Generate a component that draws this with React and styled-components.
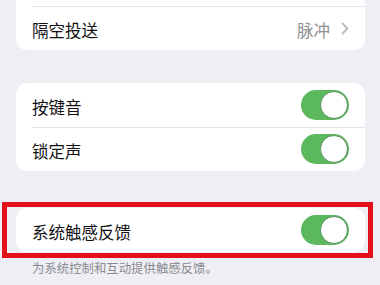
import React from 'react'
import styled, { createGlobalStyle } from 'styled-components'

const Global = createGlobalStyle`
  html, body {
    margin: 0;
    padding: 0;
    background: #efeef4;
    overflow: hidden;
  }
  body {
    font-family: "Noto Sans CJK SC", "Noto Sans", sans-serif;
    -webkit-font-smoothing: antialiased;
  }
`

const Page = styled.div`
  width: 380px;
  height: 285px;
  padding: 0 15px 0 16px;
  box-sizing: border-box;
  display: flex;
  flex-direction: column;
`

const Card = styled.div`
  background: #ffffff;
  border-radius: 11px;
  display: flex;
  flex-direction: column;
  margin-top: ${({ gap }) => gap}px;
`

const Row = styled.div`
  height: ${({ h }) => h || 44}px;
  display: flex;
  align-items: center;
  padding: 0 16px;
  position: relative;
  &:not(:first-child)::before {
    content: '';
    position: absolute;
    top: 0;
    left: 16px;
    right: 0;
    height: 1px;
    background: #e3e3e7;
  }
`

const Label = styled.span`
  flex: 1;
  font-size: 16.5px;
  color: #111113;
  padding-top: 3px;
`

const Value = styled.span`
  font-size: 16.5px;
  color: #8e8e93;
  padding-top: 3px;
  margin-right: 11px;
`

const Track = styled.div`
  width: 48px;
  height: 30px;
  border-radius: 15px;
  background: #5bb85d;
  display: flex;
  align-items: center;
  justify-content: flex-end;
  padding: 1px;
  box-sizing: border-box;
`

const Knob = styled.div`
  width: 28px;
  height: 28px;
  border-radius: 50%;
  background: #ffffff;
  box-sizing: border-box;
  border: 1.5px solid #5a8f5e;
`

const Highlight = styled.div`
  position: relative;
  margin-top: 37px;
  &::after {
    content: '';
    position: absolute;
    top: -6px;
    bottom: -6px;
    left: -14px;
    right: -8px;
    border: 5px solid #e2101a;
    pointer-events: none;
  }
`

const Footer = styled.div`
  font-size: 12.4px;
  color: #8a8a8e;
  padding: 7px 16px 0;
`

const Toggle = () => (
  <Track>
    <Knob />
  </Track>
)

const Chevron = () => (
  <svg width="8" height="13" viewBox="0 0 8 13">
    <path d="M1.5 1.5 L6.5 6.5 L1.5 11.5" fill="none" stroke="#b9b9be" strokeWidth="1.8" strokeLinecap="round" strokeLinejoin="round" />
  </svg>
)

export default function App() {
  return (
    <>
      <Global />
      <Page>
        <Card gap={-38}>
          <Row />
          <Row>
            <Label>隔空投送</Label>
            <Value>脉冲</Value>
            <Chevron />
          </Row>
        </Card>
        <Card gap={33}>
          <Row>
            <Label>按键音</Label>
            <Toggle />
          </Row>
          <Row>
            <Label>锁定声</Label>
            <Toggle />
          </Row>
        </Card>
        <Highlight>
          <Card gap={0}>
            <Row>
              <Label>系统触感反馈</Label>
              <Toggle />
            </Row>
          </Card>
        </Highlight>
        <Footer>为系统控制和互动提供触感反馈。</Footer>
      </Page>
    </>
  )
}
